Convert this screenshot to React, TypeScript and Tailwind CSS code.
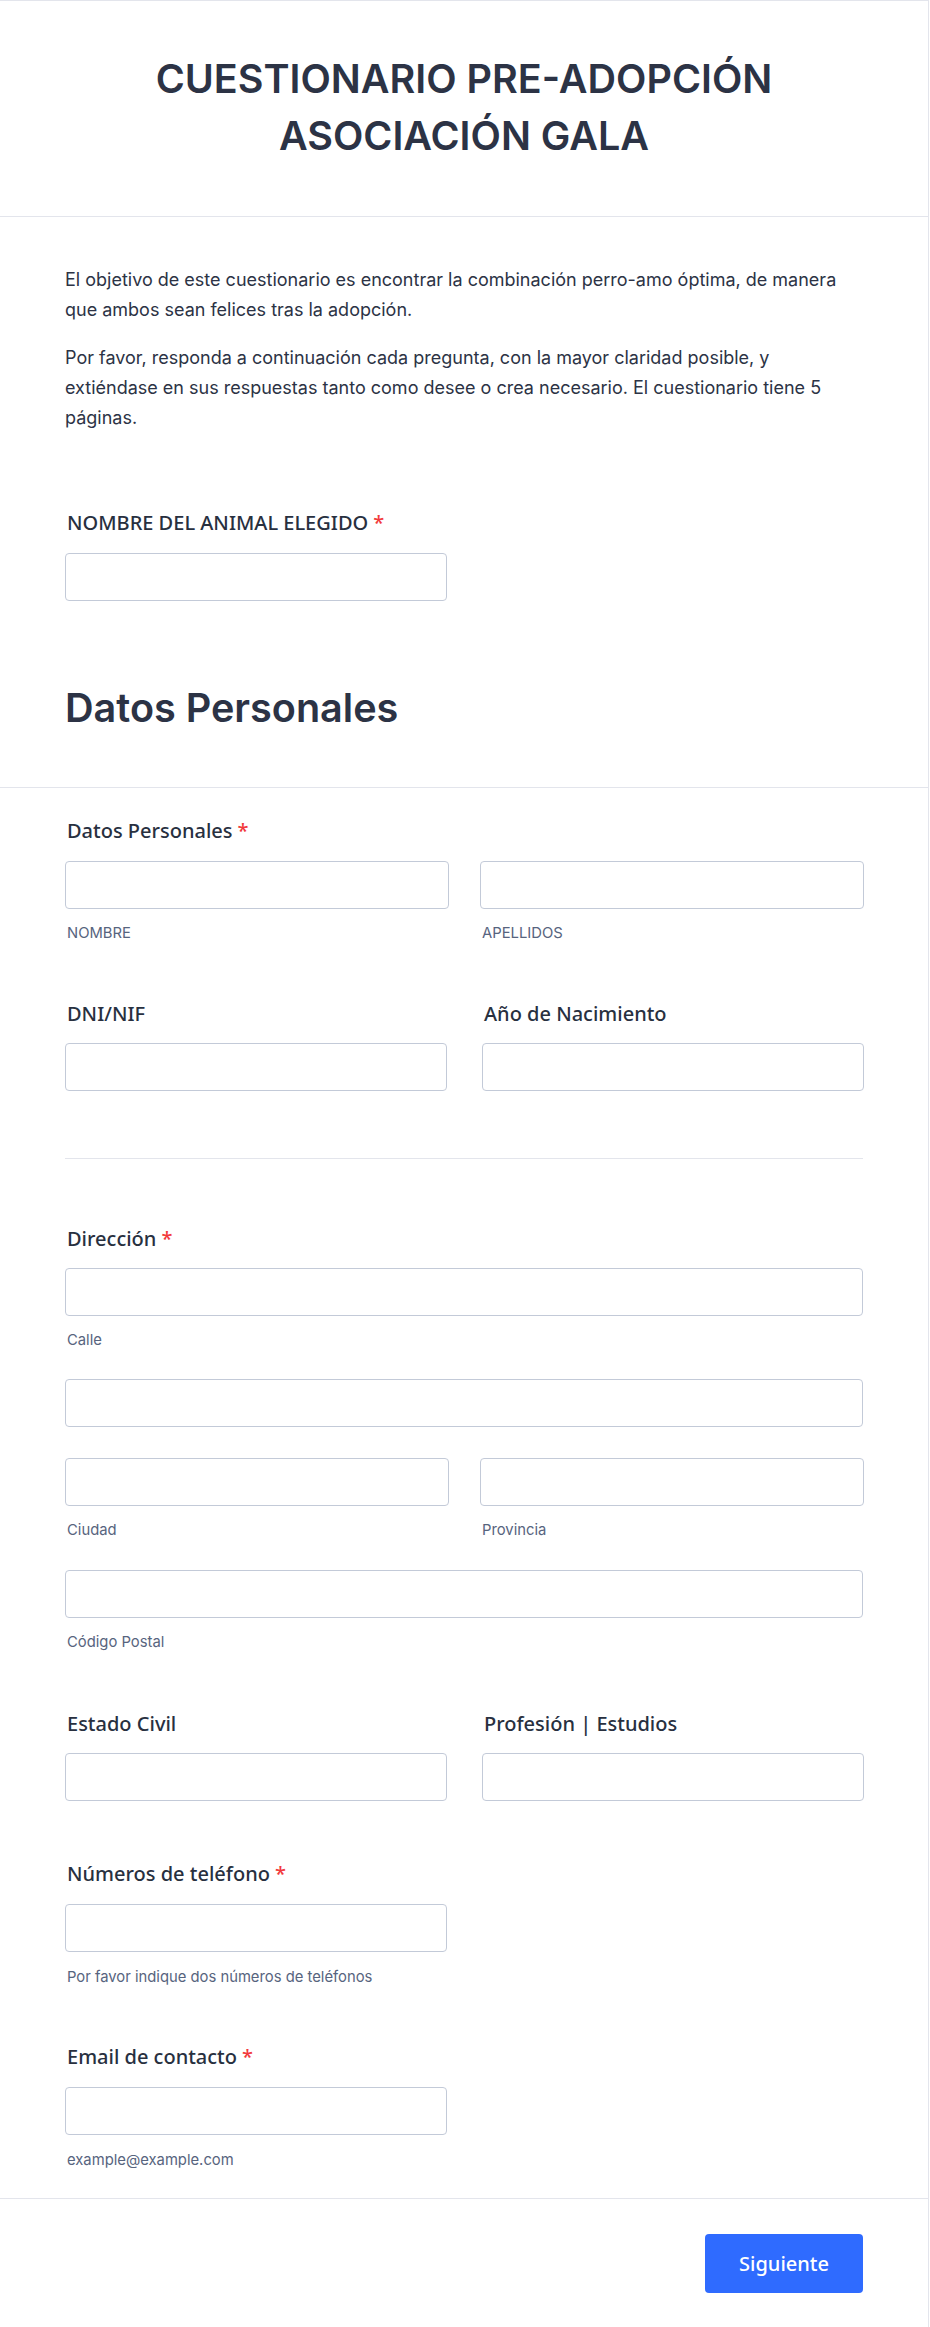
import React from "react";

const font = { fontFamily: "Inter, 'Noto Sans', 'Liberation Sans', sans-serif" };
const labelFont = { fontFamily: "'Noto Sans', 'Open Sans', 'Liberation Sans', sans-serif" };

function Req() {
  return <span className="text-[#f23a3c] ml-[5px]">*</span>;
}

function Label({ children, req, className = "" }: { children: React.ReactNode; req?: boolean; className?: string }) {
  return (
    <div style={labelFont} className={`pl-[2px] text-[20px] leading-[28px] font-medium text-[#28303f] ${className}`}>
      {children}
      {req && <Req />}
    </div>
  );
}

function Input({ className = "" }: { className?: string }) {
  return <div className={`h-[48px] rounded-[4px] border border-[#c3cad8] bg-white ${className}`} />;
}

function Sub({ children, className = "" }: { children: React.ReactNode; className?: string }) {
  return <div className={`pl-[2px] text-[14.8px] leading-[20px] text-[#57647e] ${className}`}>{children}</div>;
}

export default function App() {
  return (
    <div style={font} className="w-[929px] bg-white border-t border-r border-[#e3e5ec] text-[#2c3345]">
      {/* Header */}
      <div className="border-b border-[#e3e5ec] pt-[50px] pb-[51px] text-center">
        <h1 className="text-[39.5px] leading-[57px] font-semibold text-[#2c3345]">
          CUESTIONARIO PRE-ADOPCIÓN
          <br />
          ASOCIACIÓN GALA
        </h1>
      </div>

      {/* Intro */}
      <div className="px-[65px] pt-[48px]">
        <p className="text-[18px] leading-[30px]">
          El objetivo de este cuestionario es encontrar la combinación perro-amo óptima, de manera que ambos sean felices tras la adopción.
        </p>
        <p className="mt-[18px] text-[18px] leading-[30px]">
          Por favor, responda a continuación cada pregunta, con la mayor claridad posible, y extiéndase en sus respuestas tanto como desee o crea necesario. El cuestionario tiene 5 páginas.
        </p>

        <Label req className="mt-[76px]">NOMBRE DEL ANIMAL ELEGIDO</Label>
        <Input className="mt-[16px] w-[382px]" />
      </div>

      {/* Section heading */}
      <div className="px-[65px] pt-[83px] pb-[55px] border-b border-[#e3e5ec]">
        <h2 className="text-[39.6px] leading-[48px] font-semibold text-[#2c3345]">Datos Personales</h2>
      </div>

      <div className="px-[65px]">
        {/* Name */}
        <Label req className="mt-[29px]">Datos Personales</Label>
        <div className="mt-[16px] grid grid-cols-[384px_384px] gap-x-[31px]">
          <div>
            <Input />
            <Sub className="mt-[14px]">NOMBRE</Sub>
          </div>
          <div>
            <Input />
            <Sub className="mt-[14px]">APELLIDOS</Sub>
          </div>
        </div>

        {/* DNI / Año */}
        <div className="mt-[57px] grid grid-cols-[382px_382px] gap-x-[35px]">
          <div>
            <Label>DNI/NIF</Label>
            <Input className="mt-[15px]" />
          </div>
          <div>
            <Label>Año de Nacimiento</Label>
            <Input className="mt-[15px]" />
          </div>
        </div>

        <div className="mt-[67px] h-px bg-[#e3e5ec]" />

        {/* Dirección */}
        <Label req className="mt-[66px]">Dirección</Label>
        <Input className="mt-[15px]" />
        <Sub className="mt-[14px]">Calle</Sub>
        <Input className="mt-[29px]" />
        <div className="mt-[31px] grid grid-cols-[384px_384px] gap-x-[31px]">
          <div>
            <Input />
            <Sub className="mt-[14px]">Ciudad</Sub>
          </div>
          <div>
            <Input />
            <Sub className="mt-[14px]">Provincia</Sub>
          </div>
        </div>
        <Input className="mt-[30px]" />
        <Sub className="mt-[14px]">Código Postal</Sub>

        {/* Estado civil / Profesión */}
        <div className="mt-[58px] grid grid-cols-[382px_382px] gap-x-[35px]">
          <div>
            <Label>Estado Civil</Label>
            <Input className="mt-[15px]" />
          </div>
          <div>
            <Label>Profesión | Estudios</Label>
            <Input className="mt-[15px]" />
          </div>
        </div>

        {/* Teléfono */}
        <Label req className="mt-[59px]">Números de teléfono</Label>
        <Input className="mt-[16px] w-[382px]" />
        <Sub className="mt-[15px]">Por favor indique dos números de teléfonos</Sub>

        {/* Email */}
        <Label req className="mt-[56px]">Email de contacto</Label>
        <Input className="mt-[16px] w-[382px]" />
        <Sub className="mt-[15px]">example@example.com</Sub>
      </div>

      {/* Footer */}
      <div className="mt-[28px] border-t border-[#e3e5ec] px-[65px] pt-[35px] pb-[35px] flex justify-end">
        <button
          style={labelFont}
          className="w-[158px] h-[59px] rounded-[4px] bg-[#2f6bff] text-white text-[20px] font-medium"
        >
          Siguiente
        </button>
      </div>
    </div>
  );
}
